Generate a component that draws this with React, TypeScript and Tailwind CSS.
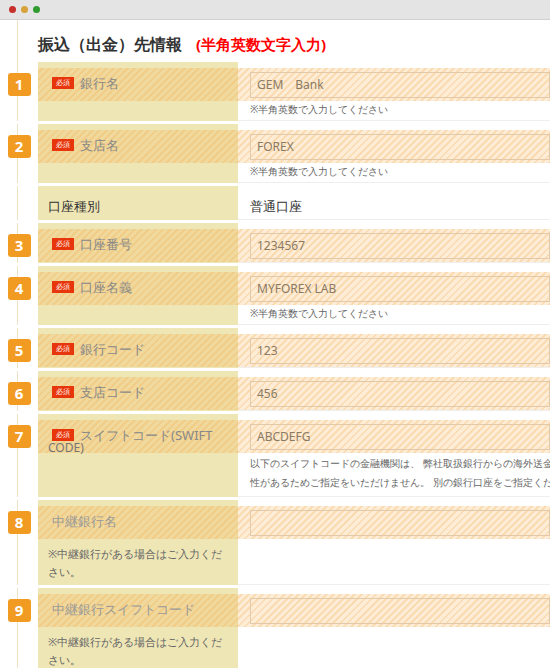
const stripe =
  'bg-[repeating-linear-gradient(-45deg,rgba(245,170,70,0.42)_0_2px,rgba(245,170,70,0.22)_2px_5px)]';

type RowProps = {
  n?: number;
  label: string;
  required?: boolean;
  value?: string;
  note?: string;
  labelNote?: string;
  extra?: string[];
  plain?: boolean;
};

function Row({ n, label, required, value, note, labelNote, extra, plain }: RowProps) {
  const pad = note || labelNote || extra ? 'pb-[4px]' : 'pb-0';
  return (
    <div className="grid grid-cols-[38px_200px_1fr] border-b-[3px] border-white">
      <div className="flex items-start justify-center pt-[11px]">
        {n ? (
          <div className="w-[23px] h-[23px] rounded-[3px] bg-[#f29b22] text-white font-bold text-[15px] leading-none flex items-center justify-center">
            {n}
          </div>
        ) : null}
      </div>
      <div className={`bg-[#efe6b6] pt-[6px] ${pad}`}>
        {plain ? (
          <div className="h-[27px] flex items-center px-[10px] text-[13px] leading-[18px] text-[#333]">{label}</div>
        ) : (
          <div className={`${stripe} h-[33px] flex items-start px-[14px] pt-[6px] gap-[6px] whitespace-nowrap`}>
            {required ? (
              <span className="mt-[3px] shrink-0 bg-[#e8360c] text-white text-[7px] leading-[12px] px-[4px]">必須</span>
            ) : null}
            <span className={`text-[13px] leading-[18px] ${required ? 'text-[#888]' : 'text-[#999]'}`}>{label}</span>
          </div>
        )}
        {extra ? <div className="px-[10px] text-[12px] text-[#777] leading-[14px] -mt-[12px]">CODE)</div> : null}
        {labelNote ? (
          <div className="px-[10px] pt-[6px] text-[11px] leading-[18px] text-[#666]">{labelNote}</div>
        ) : null}
      </div>
      <div className={`pt-[6px] ${pad} border-b border-[#eee] overflow-hidden`}>
        {plain ? (
          <div className="h-[27px] flex items-center px-[12px] text-[13px] leading-[18px] text-[#333]">{value}</div>
        ) : (
          <div className={`${stripe} h-[33px] flex items-center pl-[12px]`}>
            <div className="w-[320px] h-[26px] border border-[#e3c9a8] flex items-center px-[6px] text-[12px] leading-[16px] text-[#8a7a64]">
              {value}
            </div>
          </div>
        )}
        {note ? <div className="px-[12px] pt-[1px] text-[10px] leading-[14px] text-[#666]">{note}</div> : null}
        {extra ? (
          <div className="pl-[12px] pt-[1px] text-[10px] leading-[19px] text-[#666] whitespace-nowrap">
            {extra.map((t) => (
              <div key={t}>{t}</div>
            ))}
          </div>
        ) : null}
      </div>
    </div>
  );
}

export default function App() {
  const note = '※半角英数で入力してください';
  return (
    <div className="w-[550px] h-[668px] overflow-hidden bg-white font-['Noto_Sans_CJK_JP','Noto_Sans',sans-serif]">
      <div className="h-[20px] bg-[#e4e4e4] border-b border-[#d0d0d0] flex items-center gap-[5px] pl-[9px]">
        <span className="w-[7px] h-[7px] rounded-full bg-[#c8302a]" />
        <span className="w-[7px] h-[7px] rounded-full bg-[#d8a23a]" />
        <span className="w-[7px] h-[7px] rounded-full bg-[#2f9a2e]" />
      </div>
      <div className="bg-[linear-gradient(to_right,transparent_17px,#efe2c2_17px,#efe2c2_18px,transparent_18px)]">
        <div className="h-[42px] flex items-end pb-[7px] pl-[38px] gap-[14px]">
          <span className="text-[16px] leading-[22px] font-bold text-[#333]">振込（出金）先情報</span>
          <span className="text-[15px] leading-[22px] font-bold text-[#f00]">(半角英数文字入力)</span>
        </div>
        <Row n={1} label="銀行名" required value="GEM　Bank" note={note} />
        <Row n={2} label="支店名" required value="FOREX" note={note} />
        <Row label="口座種別" plain value="普通口座" />
        <Row n={3} label="口座番号" required value="1234567" />
        <Row n={4} label="口座名義" required value="MYFOREX LAB" note={note} />
        <Row n={5} label="銀行コード" required value="123" />
        <Row n={6} label="支店コード" required value="456" />
        <Row
          n={7}
          label="スイフトコード(SWIFT"
          required
          value="ABCDEFG"
          extra={[
            '以下のスイフトコードの金融機関は、 弊社取扱銀行からの海外送金',
            '性があるためご指定をいただけません。 別の銀行口座をご指定くだ',
          ]}
        />
        <Row n={8} label="中継銀行名" labelNote="※中継銀行がある場合はご入力ください。" />
        <Row n={9} label="中継銀行スイフトコード" labelNote="※中継銀行がある場合はご入力ください。" />
      </div>
    </div>
  );
}
